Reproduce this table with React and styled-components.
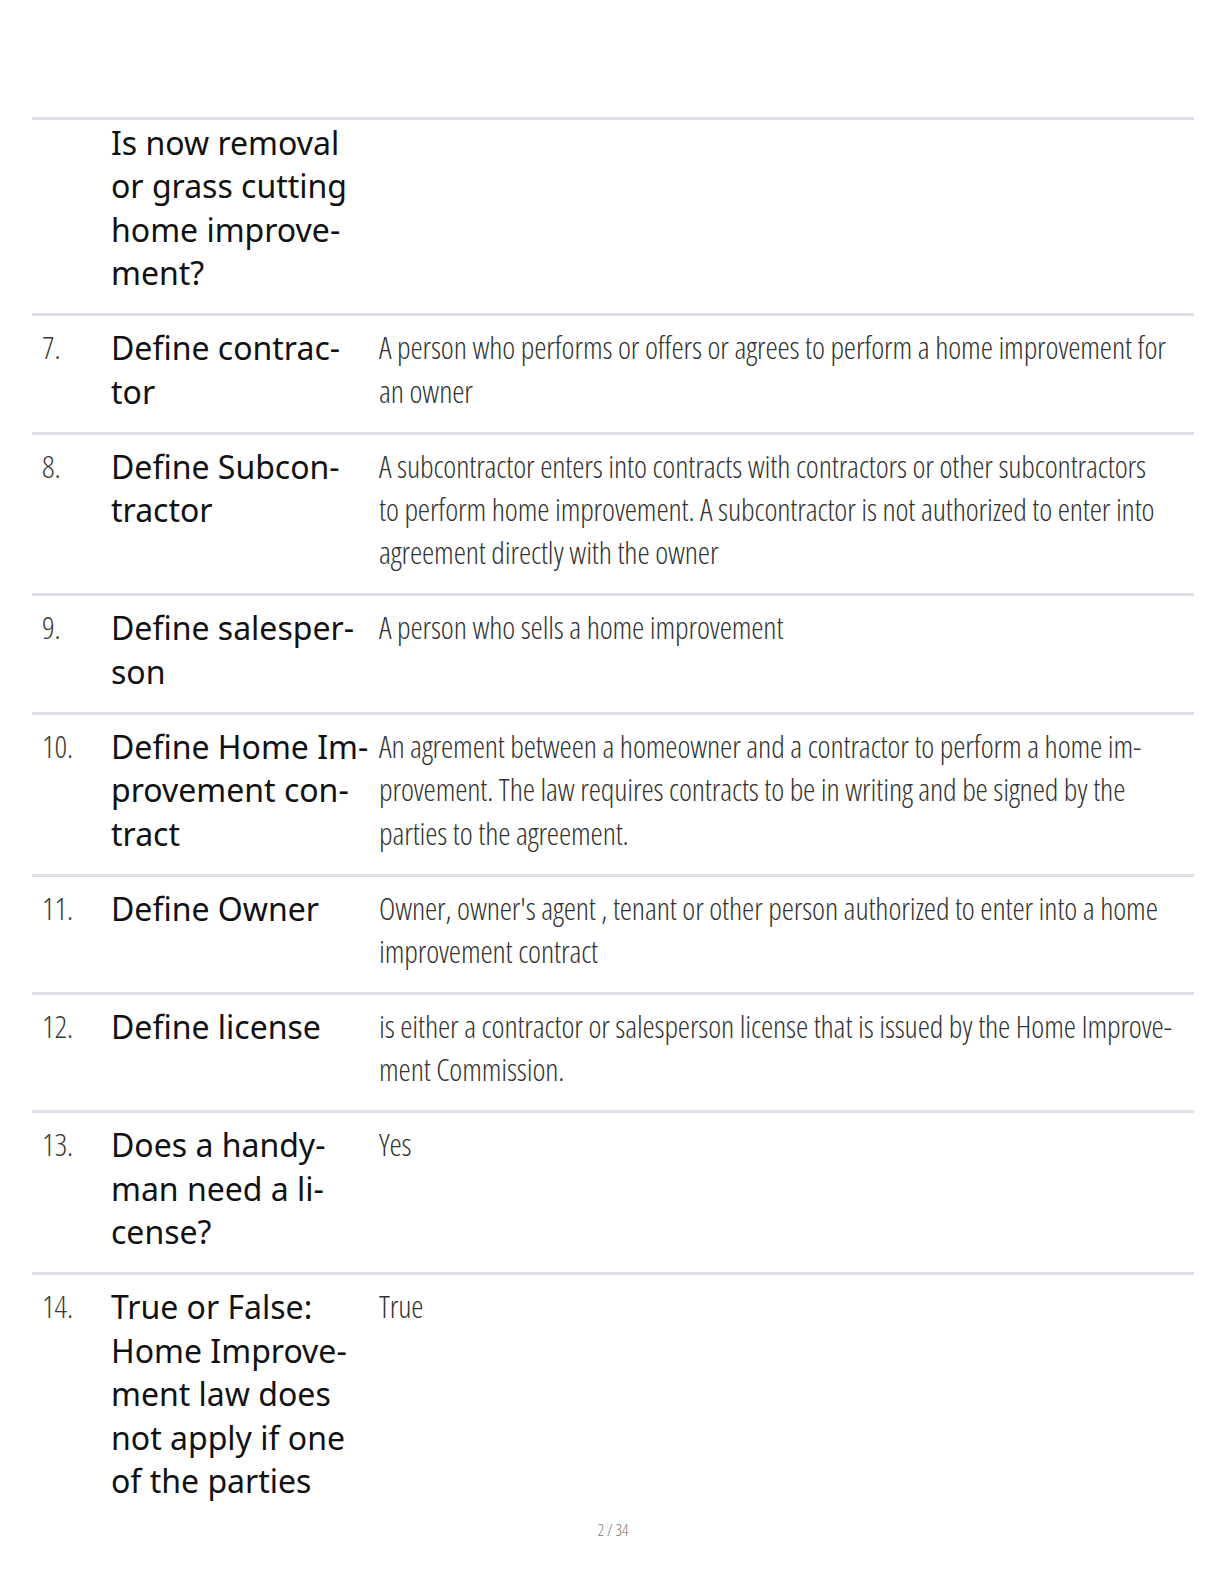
import React from "react";
import styled, { createGlobalStyle } from "styled-components";

const GlobalStyle = createGlobalStyle`
  body {
    margin: 0;
    background: #fff;
  }
`;

const Page = styled.div`
  width: 1224px;
  height: 1584px;
  box-sizing: border-box;
  padding: 117px 30px 0 32px;
  display: flex;
  flex-direction: column;
`;

const Table = styled.div`
  display: flex;
  flex-direction: column;
`;

const Row = styled.div`
  display: grid;
  grid-template-columns: 79px 268px 1fr;
  border-top: 3px solid #dcdfe8;
  padding-top: ${(p) => (p.$cont ? "1px" : "10px")};
  padding-bottom: ${(p) => (p.$last ? "0" : "18.6px")};
`;

const Num = styled.div`
  padding-left: 10px;
  font-family: "Open Sans", "Liberation Sans Narrow", sans-serif;
  font-stretch: 75%;
  font-weight: 300;
  font-size: 31px;
  letter-spacing: -0.1px;
  line-height: 43.4px;
  color: #3a3a3a;
`;

const Question = styled.div`
  font-family: "Noto Sans", "Open Sans", sans-serif;
  font-size: 32px;
  line-height: 43.4px;
  color: #111;
`;

const Answer = styled.div`
  font-family: "Open Sans", "Liberation Sans Narrow", sans-serif;
  font-stretch: 75%;
  font-weight: 300;
  font-size: 31px;
  letter-spacing: -0.15px;
  line-height: 43.4px;
  color: #333;
  padding-right: 20px;
`;

const Line = styled.span`
  display: block;
  white-space: nowrap;
`;

const Footer = styled.div`
  margin-top: 17px;
  text-align: center;
  font-family: "Open Sans", sans-serif;
  font-stretch: 75%;
  font-weight: 300;
  font-size: 16px;
  color: #777;
`;

const rows = [
  {
    cont: true,
    n: "",
    q: ["Is now removal", "or grass cutting", "home improve-", "ment?"],
    a: [],
  },
  {
    n: "7.",
    q: ["Define contrac-", "tor"],
    a: [
      "A person who performs or offers or agrees to perform a home improvement for",
      "an owner",
    ],
  },
  {
    n: "8.",
    q: ["Define Subcon-", "tractor"],
    a: [
      "A subcontractor enters into contracts with contractors or other subcontractors",
      "to perform home improvement. A subcontractor is not authorized to enter into",
      "agreement directly with the owner",
    ],
  },
  {
    n: "9.",
    q: ["Define salesper-", "son"],
    a: ["A person who sells a home improvement"],
  },
  {
    n: "10.",
    q: ["Define Home Im-", "provement con-", "tract"],
    a: [
      "An agrement between a homeowner and a contractor to perform a home im-",
      "provement. The law requires contracts to be in writing and be signed by the",
      "parties to the agreement.",
    ],
  },
  {
    n: "11.",
    q: ["Define Owner"],
    a: [
      "Owner, owner's agent , tenant or other person authorized to enter into a home",
      "improvement contract",
    ],
  },
  {
    n: "12.",
    q: ["Define license"],
    a: [
      "is either a contractor or salesperson license that is issued by the Home Improve-",
      "ment Commission.",
    ],
  },
  {
    n: "13.",
    q: ["Does a handy-", "man need a li-", "cense?"],
    a: ["Yes"],
  },
  {
    n: "14.",
    q: [
      "True or False:",
      "Home Improve-",
      "ment law does",
      "not apply if one",
      "of the parties",
    ],
    a: ["True"],
  },
];

export default function App() {
  return (
    <Page>
      <GlobalStyle />
      <Table>
        {rows.map((r, i) => (
          <Row key={i} $cont={r.cont} $last={i === rows.length - 1}>
            <Num>{r.n}</Num>
            <Question>
              {r.q.map((l, j) => (
                <Line key={j}>{l}</Line>
              ))}
            </Question>
            <Answer>
              {r.a.map((l, j) => (
                <Line key={j}>{l}</Line>
              ))}
            </Answer>
          </Row>
        ))}
      </Table>
      <Footer>2 / 34</Footer>
    </Page>
  );
}
